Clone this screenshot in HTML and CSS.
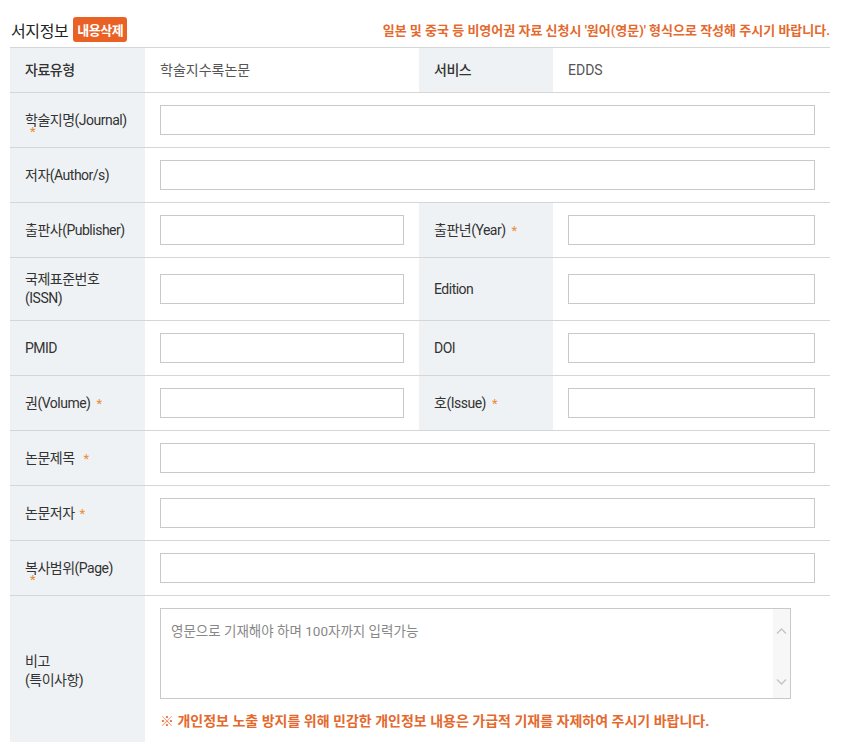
FILE: index.html
```html
<!DOCTYPE html>
<html lang="ko">
<head>
<meta charset="utf-8">
<link rel="stylesheet" href="styles.css">
</head>
<body>
<div class="wrap">
  <div class="head">
    <div class="head-left">
      <h2 class="title">서지정보</h2>
      <button class="badge" type="button">내용삭제</button>
    </div>
    <p class="head-note">일본 및 중국 등 비영어권 자료 신청시 '원어(영문)' 형식으로 작성해 주시기 바랍니다.</p>
  </div>
  <table class="form">
    <colgroup>
      <col class="c1"><col class="c2"><col class="c3"><col class="c4">
    </colgroup>
    <tr class="r-info">
      <th>자료유형</th>
      <td class="val">학술지수록논문</td>
      <th>서비스</th>
      <td class="val">EDDS</td>
    </tr>
    <tr>
      <th><span class="lab">학술지명(Journal)<i class="star under">*</i></span></th>
      <td colspan="3"><input class="inp" type="text"></td>
    </tr>
    <tr>
      <th>저자(Author/s)</th>
      <td colspan="3"><input class="inp" type="text"></td>
    </tr>
    <tr>
      <th>출판사(Publisher)</th>
      <td><input class="inp" type="text"></td>
      <th>출판년(Year) &nbsp;<i class="star">*</i></th>
      <td><input class="inp" type="text"></td>
    </tr>
    <tr>
      <th>국제표준번호<br>(ISSN)</th>
      <td><input class="inp" type="text"></td>
      <th>Edition</th>
      <td><input class="inp" type="text"></td>
    </tr>
    <tr>
      <th>PMID</th>
      <td><input class="inp" type="text"></td>
      <th>DOI</th>
      <td><input class="inp" type="text"></td>
    </tr>
    <tr>
      <th>권(Volume) &nbsp;<i class="star">*</i></th>
      <td><input class="inp" type="text"></td>
      <th>호(Issue) &nbsp;<i class="star">*</i></th>
      <td><input class="inp" type="text"></td>
    </tr>
    <tr>
      <th>논문제목 &nbsp;&nbsp;<i class="star">*</i></th>
      <td colspan="3"><input class="inp" type="text"></td>
    </tr>
    <tr>
      <th>논문저자<i class="star gap">*</i></th>
      <td colspan="3"><input class="inp" type="text"></td>
    </tr>
    <tr>
      <th><span class="lab">복사범위(Page)<i class="star under">*</i></span></th>
      <td colspan="3"><input class="inp" type="text"></td>
    </tr>
    <tr class="r-memo">
      <th>비고<br>(특이사항)</th>
      <td colspan="3">
        <div class="ta-wrap">
          <textarea class="ta" placeholder="영문으로 기재해야 하며 100자까지 입력가능"></textarea>
          <div class="sbar">
            <svg width="17" height="17" viewBox="0 0 17 17"><path d="M4 10.5 L8.5 6 L13 10.5" fill="none" stroke="#c4c4c4" stroke-width="1.3"/></svg>
            <svg width="17" height="17" viewBox="0 0 17 17"><path d="M4 6.5 L8.5 11 L13 6.5" fill="none" stroke="#c4c4c4" stroke-width="1.3"/></svg>
          </div>
        </div>
        <p class="memo-note">※ 개인정보 노출 방지를 위해 민감한 개인정보 내용은 가급적 기재를 자제하여 주시기 바랍니다.</p>
      </td>
    </tr>
  </table>
</div>
</body>
</html>
```
FILE: styles.css
```css
* { box-sizing: border-box; }
html, body { margin: 0; padding: 0; background: #fff; }
body {
  font-family: Roboto, "Noto Sans CJK KR", "Noto Sans", sans-serif;
  color: #333;
}
.wrap {
  width: 820px;
  margin-left: 10px;
}
.head {
  display: flex;
  justify-content: space-between;
  align-items: center;
  padding-top: 17px;
  height: 47px;
  padding-bottom: 5px;
}
.head-left {
  display: flex;
  align-items: center;
  gap: 5px;
}
.title {
  margin: 0 0 0 1px;
  font-size: 16px;
  font-weight: 400;
  color: #222;
  letter-spacing: -0.4px;
}
.badge {
  border: 0;
  background: #ea6125;
  color: #fff;
  font-family: inherit;
  font-size: 13px;
  font-weight: 700;
  height: 25px;
  width: 54px;
  padding: 0;
  border-radius: 3px;
  letter-spacing: -0.5px;
}
.head-note {
  margin: 0;
  font-size: 13px;
  font-weight: 700;
  color: #e5692d;
  letter-spacing: 0;
}
.form {
  width: 820px;
  border-collapse: collapse;
  table-layout: fixed;
  border-top: 1px solid #d6d6d6;
  font-size: 14px;
}
.c1 { width: 135px; }
.c2 { width: 274px; }
.c3 { width: 134px; }
.c4 { width: 277px; }
.form tr { border-bottom: 1px solid #d6d6d6; }
.form th, .form td {
  padding: 12px 15px;
  vertical-align: middle;
  text-align: left;
  line-height: 19px;
}
.form .r-info th, .form .r-info td { line-height: 20px; }
.form th {
  background: #eff2f4;
  font-weight: 400;
  color: #333;
  letter-spacing: -0.5px;
}
.r-info th { font-weight: 500; }
.form td.val { color: #555; }
.star {
  font-style: normal;
  color: #ec8a34;
  font-size: 13px;
}
.star.gap { margin-left: 5px; }
.lab { position: relative; }
.star.under {
  position: absolute;
  left: 5px;
  top: 10px;
}
.inp {
  display: block;
  width: 100%;
  height: 30px;
  border: 1px solid #c9c9c9;
  background: #fff;
  margin: 0;
  padding: 0 8px;
  font-family: inherit;
  font-size: 14px;
}
.form .r-memo td { padding-top: 12px; padding-bottom: 14px; }
.ta-wrap {
  position: relative;
  width: 631px;
  height: 91px;
}
.ta {
  display: block;
  width: 631px;
  height: 91px;
  resize: none;
  border: 1px solid #c9c9c9;
  padding: 11px 28px 8px 10px;
  font-family: inherit;
  font-size: 13.5px;
  color: #333;
  overflow: hidden;
  margin: 0;
}
.ta::placeholder { color: #888; }
.sbar {
  position: absolute;
  right: 1px;
  top: 1px;
  bottom: 1px;
  width: 17px;
  background: #f7f7f7;
  display: flex;
  flex-direction: column;
  justify-content: space-between;
  padding: 14px 0 8px;
}
.sbar svg { display: block; }
.memo-note {
  margin: 12px 0 0;
  font-size: 14px;
  font-weight: 700;
  color: #e5692d;
  line-height: 20px;
  letter-spacing: 0;
}
```
